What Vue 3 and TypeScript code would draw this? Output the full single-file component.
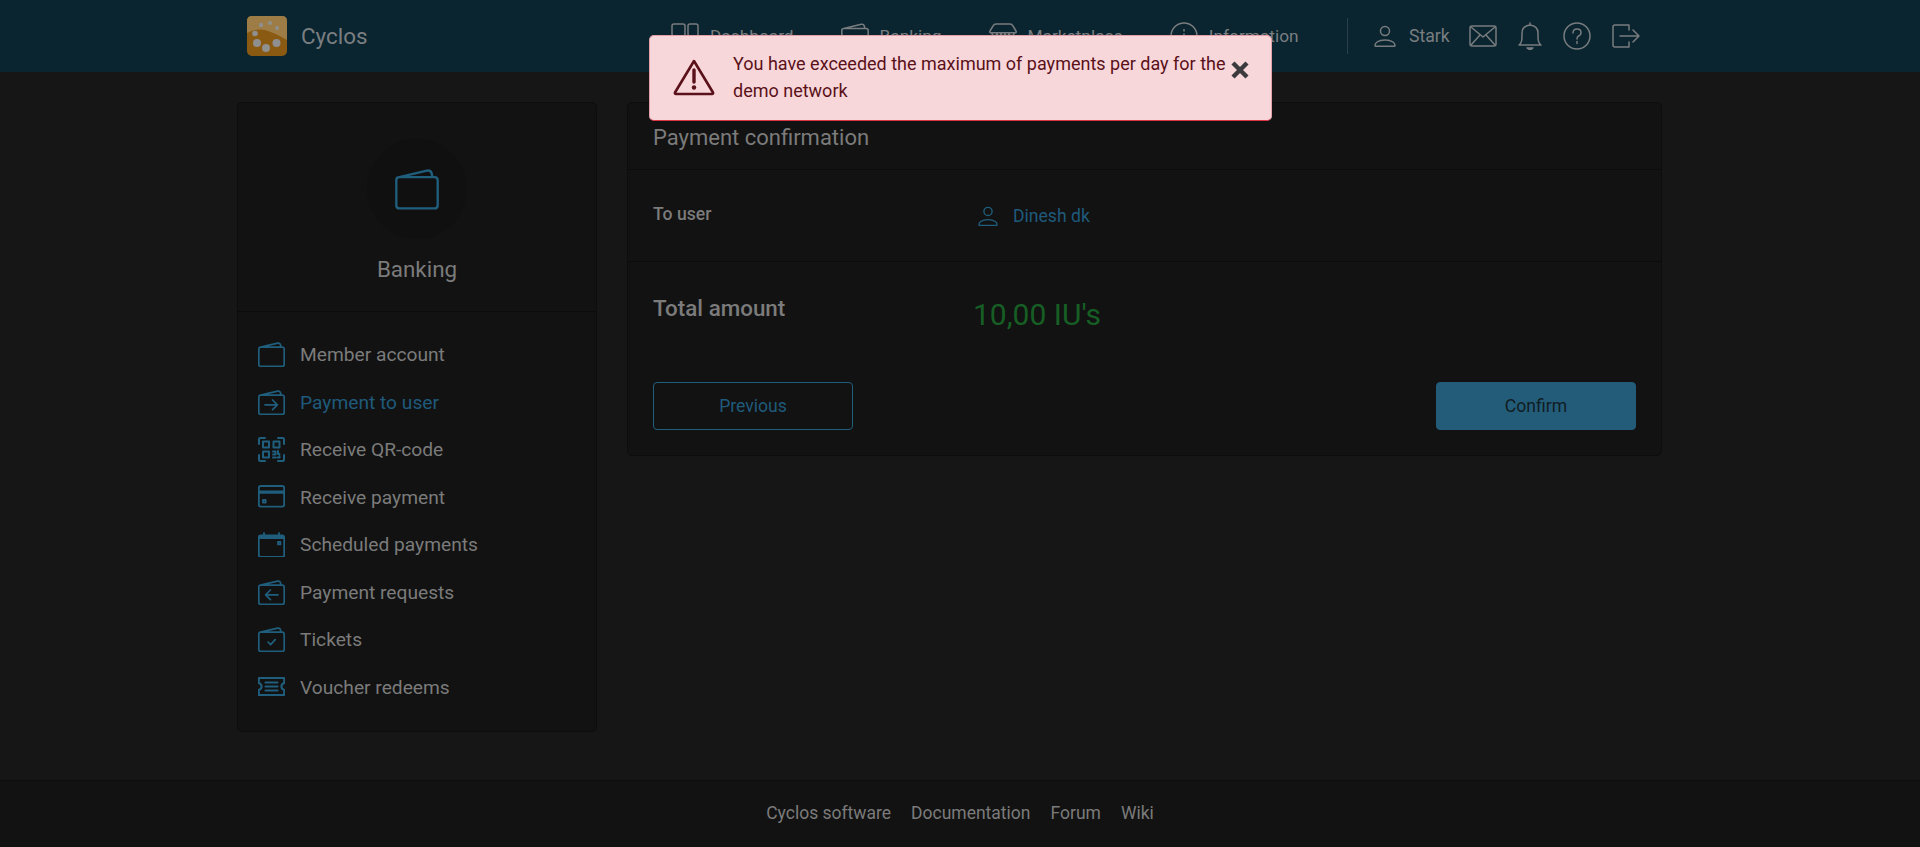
<script setup lang="ts">
import { ref } from "vue"

type Icon = { d: string; sw?: number }

const wallet = "M2.6 5.2 19.6 1.2q2.2-.4 2.8 1.4l.6 2.6M2.6 5.2h21.6q2 0 2 2v15.2q0 2-2 2H2.8q-2 0-2-2V7q0-1.8 1.8-1.8Z"

const icons: Record<string, Icon> = {
    wallet: { d: wallet },
    payment: { d: wallet + "M7 14.8h12.4M14.6 10l4.8 4.8-4.8 4.8" },
    qr: {
        d: "M1 7V2.2q0-1.200 1.200-1.200H7M20 1h4.800Q26 1 26 2.200V7M1 18v4.800Q1 24 2.200 24H7M26 18v4.800q0 1.200-1.200 1.200H20M5 4.500h6v6H5ZM15.500 4.500h6v6h-6ZM5 14.500h6v6H5ZM15 14.500h2.500v3H15M20 14v3h1.500M15 20.500h2.500M19.500 20.500h2v-1.500",
        sw: 2,
    },
    card: { d: "M2.800 1h21.400q2 0 2 2v16.600q0 2-2 2H2.800q-2 0-2-2V3q0-2 2-2ZM.8 6.500h25.400M.8 7.700h25.400M5 15h2.600v2.600H5Z", sw: 1.900 },
    calendar: { d: "M2.800 3.500h21.400q2 0 2 2v17.500q0 2-2 2H2.800q-2 0-2-2V5.500q0-2 2-2ZM1.500 4.500h24M1.500 6h24M6 1v2.500M21 1v2.500M20 10h2.400v2.400H20Z", sw: 1.800 },
    request: { d: wallet + "M20 14.800H7.600M12.400 10l-4.800 4.800 4.800 4.800" },
    ticket: { d: wallet + "M10 15l2.600 2.600 4.600-5" },
    voucher: {
        d: "M.8 3h25.400v5q-2.800 1-2.800 3.500t2.800 3.500v5H.8v-5q2.800-1 2.800-3.500T.8 8ZM7.500 7.500h12M7.500 11.500h12M7.500 15.500h12",
        sw: 2.100,
    },
}

const menu = [
    { label: "Member account", icon: "wallet" },
    { label: "Payment to user", icon: "payment", active: true },
    { label: "Receive QR-code", icon: "qr" },
    { label: "Receive payment", icon: "card" },
    { label: "Scheduled payments", icon: "calendar" },
    { label: "Payment requests", icon: "request" },
    { label: "Tickets", icon: "ticket" },
    { label: "Voucher redeems", icon: "voucher" },
]

const footerLinks = ["Cyclos software", "Documentation", "Forum", "Wiki"]

const showNotification = ref(true)
</script>

<template>
    <div class="page">
        <header class="topbar">
            <div class="topbar-inner">
                <a class="brand">
                    <svg class="logo" viewBox="0 0 40 40" width="40" height="40">
                        <rect width="40" height="40" rx="5" fill="#8a5a12" />
                        <path d="M0 17Q10 12 18 14T40 24V5q0-5-5-5H5Q0 0 0 5Z" fill="#9d7c46" />
                        <g fill="#8f8f8f">
                            <circle cx="14" cy="9" r="2.200" />
                            <circle cx="23" cy="7" r="2" />
                            <circle cx="30" cy="12" r="2" />
                            <circle cx="8" cy="17.500" r="2.800" />
                            <circle cx="10" cy="27" r="4" />
                            <circle cx="19" cy="32" r="4" />
                            <circle cx="29.500" cy="27" r="4" />
                        </g>
                    </svg>
                    <span>Cyclos</span>
                </a>

                <nav class="nav">
                    <a class="nav-item">
                        <svg width="28" height="28" viewBox="0 0 28 28" class="line">
                            <rect x="1" y="2" width="13" height="12" rx="2" />
                            <rect x="17" y="2" width="10" height="12" rx="2" />
                            <path d="M2 18h11M18 18h8" />
                        </svg>
                        Dashboard
                    </a>
                    <a class="nav-item">
                        <svg width="28" height="26" viewBox="0 0 27 25" class="line"><path :d="icons.wallet.d" /></svg>
                        Banking
                    </a>
                    <a class="nav-item">
                        <svg width="28" height="28" viewBox="0 0 28 28" class="line">
                            <path d="M7 2h14q2 0 3 2l3 5q.6 1.500-.6 1.800H1.600Q.4 10.500 1 9l3-5q1-2 3-2Z" />
                            <path d="M3 10.800q0 3 2.500 3t2.500-3q0 3 2 3t2-3q0 3 2 3t2-3q0 3 2 3t2-3q0 3 2.500 3t2.500-3M4 14v11h20V14" />
                        </svg>
                        Marketplace
                    </a>
                    <a class="nav-item">
                        <svg width="28" height="28" viewBox="0 0 28 28" class="line">
                            <circle cx="14" cy="14" r="13" />
                            <path d="M14 12v8M14 7.500v1.500" />
                        </svg>
                        Information
                    </a>
                </nav>

                <div class="user-menu">
                    <a class="user">
                        <svg width="22" height="22" viewBox="0 0 22 22" class="line">
                            <circle cx="11" cy="6" r="4.500" />
                            <path d="M1 20.500q0-2 2-3.500 3-2 8-2t8 2q2 1.500 2 3.500 0 .8-1 .8H2q-1 0-1-.8Z" />
                        </svg>
                        Stark
                    </a>
                    <svg width="28" height="22" viewBox="0 0 28 22" class="line">
                        <rect x="1" y="1" width="26" height="20" rx="2" />
                        <path d="M2 2l12 10L26 2M2 20l9-10M26 20l-9-10" />
                    </svg>
                    <svg width="24" height="28" viewBox="0 0 24 28" class="line">
                        <path d="M1 23q3-2 3-8v-4q0-7 8-8 8 1 8 8v4q0 6 3 8ZM12 3V1" />
                        <path d="M9 26h6l-3 2Z" fill="#787c7e" />
                    </svg>
                    <svg width="28" height="28" viewBox="0 0 28 28" class="line">
                        <circle cx="14" cy="14" r="13" />
                        <path d="M10 11q0-4 4-4t4 3.500q0 2.500-2.500 3.500-1.500.8-1.500 3M14 19.500v2" />
                    </svg>
                    <svg width="28" height="24" viewBox="0 0 28 24" class="line">
                        <path d="M17 1H3Q1 1 1 3v18q0 2 2 2h14v-5M17 6V1M8 12h19M21 6l6 6-6 6" />
                    </svg>
                </div>
            </div>
        </header>

        <main class="content">
            <aside class="card sidebar">
                <div class="side-head">
                    <div class="side-circle">
                        <svg width="44" height="42" viewBox="0 0 27 25" class="blue-line thin"><path :d="icons.wallet.d" /></svg>
                    </div>
                    <h2>Banking</h2>
                </div>
                <ul class="side-menu">
                    <li v-for="item in menu" :key="item.label" :class="{ active: item.active }">
                        <svg width="27" height="25" viewBox="0 0 27 25" class="blue-line" :style="{ strokeWidth: icons[item.icon].sw ?? 1.7 }"><path :d="icons[item.icon].d" /></svg>
                        {{ item.label }}
                    </li>
                </ul>
            </aside>

            <section class="card panel">
                <div class="panel-title">Payment confirmation</div>
                <div class="row to-user">
                    <label>To user</label>
                    <a class="user-link">
                        <svg width="20" height="20" viewBox="0 0 22 22" class="blue-line">
                            <circle cx="11" cy="6" r="4.500" />
                            <path d="M1 20.500q0-2 2-3.500 3-2 8-2t8 2q2 1.500 2 3.500 0 .8-1 .8H2q-1 0-1-.8Z" />
                        </svg>
                        Dinesh dk
                    </a>
                </div>
                <div class="row total">
                    <label>Total amount</label>
                    <span class="amount">10,00 IU's</span>
                </div>
                <div class="actions">
                    <button class="btn btn-outline">Previous</button>
                    <button class="btn btn-solid">Confirm</button>
                </div>
            </section>
        </main>

        <footer class="footer">
            <a v-for="link in footerLinks" :key="link">{{ link }}</a>
        </footer>

        <div v-if="showNotification" class="notification">
            <svg class="warn" width="42" height="38" viewBox="0 0 42 38">
                <path d="M21 3 40 34.500q.5 1.500-1 1.500H3q-1.500 0-1-1.500Z" fill="none" stroke="#5a1119" stroke-width="2.600" stroke-linejoin="round" />
                <path d="M21 12v12" stroke="#5a1119" stroke-width="3.400" stroke-linecap="round" />
                <circle cx="21" cy="29.500" r="2.200" fill="#5a1119" />
            </svg>
            <p>You have exceeded the maximum of payments per day for the demo network</p>
            <button class="close" @click="showNotification = false">
                <svg width="18" height="18" viewBox="0 0 18 18"><path d="M2 2l14 14M16 2 2 16" stroke="#3b3b3d" stroke-width="4.400" /></svg>
            </button>
        </div>
    </div>
</template>

<style>
body {
    background: #161616;
}
</style>

<style scoped>
.page {
    min-height: 847px;
    display: flex;
    flex-direction: column;
    font-family: Roboto, "Liberation Sans", sans-serif;
    color: #7b7b7b;
    font-size: 19.200px;
}

.topbar {
    height: 72px;
    background: #0a2530;
    flex-shrink: 0;
}

.topbar-inner {
    height: 100%;
    margin-left: 247px;
    display: flex;
    align-items: center;
    color: #7a7e80;
}

.brand {
    display: flex;
    align-items: center;
    gap: 14px;
    font-size: 22.400px;
    width: 424px;
    flex-shrink: 0;
}

.logo {
    flex-shrink: 0;
}

.nav {
    display: flex;
    align-items: center;
    gap: 47px;
    width: 676px;
    flex-shrink: 0;
}

.nav-item {
    display: flex;
    align-items: center;
    gap: 11px;
    font-size: 17.300px;
}

.line,
.blue-line {
    fill: none;
    stroke-width: 1.500;
    stroke-linecap: round;
    stroke-linejoin: round;
    flex-shrink: 0;
}

.line {
    stroke: #787c7e;
}

.blue-line {
    stroke: #205e7d;
}

.thin {
    stroke-width: 1.450;
}

.user-menu {
    display: flex;
    align-items: center;
    gap: 21px;
    height: 36px;
    flex-shrink: 0;
    border-left: 1px solid #2a3e47;
    padding-left: 26px;
}

.user {
    display: flex;
    align-items: center;
    gap: 13px;
    margin-right: -2px;
    font-size: 17.600px;
}

.content {
    flex: 1;
    display: flex;
    align-items: flex-start;
    gap: 30px;
    padding: 30px 258px 48px 237px;
}

.card {
    background: #121212;
    border: 1px solid #0d0d0d;
    border-radius: 5px;
    box-sizing: border-box;
}

.sidebar {
    width: 360px;
    height: 630px;
    flex-shrink: 0;
}

.side-head {
    height: 209px;
    border-bottom: 1px solid #0b0b0b;
    display: flex;
    flex-direction: column;
    align-items: center;
    padding-top: 36px;
    box-sizing: border-box;
}

.side-circle {
    width: 100px;
    height: 100px;
    border-radius: 50%;
    background: #101010;
    display: flex;
    align-items: center;
    justify-content: center;
}

.side-head h2 {
    margin: 17px 0 0;
    font-size: 22.400px;
    font-weight: 400;
    color: #7b7b7b;
}

.side-menu {
    list-style: none;
    margin: 0;
    padding: 19px 0 0 20px;
}

.side-menu li {
    height: 47.500px;
    display: flex;
    align-items: center;
    gap: 15px;
}

.side-menu li.active {
    color: #1f5a7c;
}

.panel {
    flex: 1;
    height: 354px;
}

.panel-title {
    height: 67px;
    padding: 2px 25px 0;
    box-sizing: border-box;
    display: flex;
    align-items: center;
    font-size: 22px;
    border-bottom: 1px solid #0b0b0b;
}

.row {
    display: flex;
    padding: 0 25px;
}

.row label {
    width: 320px;
    flex-shrink: 0;
    font-weight: 500;
}

.to-user {
    height: 92px;
    border-bottom: 1px solid #0b0b0b;
    padding-top: 34px;
    box-sizing: border-box;
}

.to-user label {
    font-size: 17.600px;
    color: #7b7b7b;
}

.user-link {
    display: flex;
    align-items: center;
    gap: 15px;
    height: 24px;
    margin-left: 5px;
    font-size: 17.600px;
    color: #1f5a7c;
}

.total {
    height: 120px;
    padding-top: 32px;
    box-sizing: border-box;
}

.total label {
    font-size: 22.400px;
    line-height: 28px;
}

.amount {
    font-size: 30px;
    line-height: 42px;
    color: #165e24;
}

.actions {
    display: flex;
    justify-content: space-between;
    padding: 0 25px;
}

.btn {
    width: 200px;
    height: 48px;
    border-radius: 4px;
    font-family: inherit;
    font-size: 17.600px;
}

.btn-outline {
    background: transparent;
    border: 1px solid #205e7d;
    color: #1f5a7c;
}

.btn-solid {
    background: #235c78;
    border: 1px solid #235c78;
    color: #111c24;
}

.footer {
    height: 67px;
    flex-shrink: 0;
    background: #121212;
    border-top: 1px solid #0d0d0d;
    display: flex;
    align-items: center;
    justify-content: center;
    gap: 20px;
    padding-bottom: 3px;
    box-sizing: border-box;
    font-size: 17.500px;
}

/* toast sits over the header and the panel */
.notification {
    position: absolute;
    top: 35px;
    left: 649px;
    width: 623px;
    height: 86px;
    box-sizing: border-box;
    display: flex;
    align-items: center;
    padding: 0 20px 2px 23px;
    background: #f8d7da;
    border: 1px solid #dc3545;
    border-top-color: #e4a0a8;
    border-left-color: #e4a0a8;
    border-right-color: #e4a0a8;
    border-radius: 5px;
    color: #5a1119;
}

.warn {
    flex-shrink: 0;
    margin-right: 18px;
}

.notification p {
    margin: 0;
    width: 498px;
    flex-shrink: 0;
    font-size: 18px;
    line-height: 27px;
}

.close {
    border: none;
    background: transparent;
    padding: 0;
    margin-bottom: 14px;
    display: flex;
}
</style>
